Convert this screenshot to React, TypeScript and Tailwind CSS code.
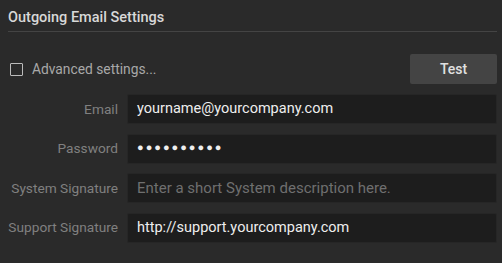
const fields = [
  { label: 'Email', value: 'yourname@yourcompany.com' },
  { label: 'Password', value: '●●●●●●●●●●', password: true },
  { label: 'System Signature', placeholder: 'Enter a short System description here.' },
  { label: 'Support Signature', value: 'http://support.yourcompany.com' },
]

export default function App() {
  return (
    <div
      className="w-[502px] h-[263px] bg-[#2a2a2a] pl-2 pr-[5px] pt-[9px]"
      style={{ fontFamily: 'Roboto, "Liberation Sans", sans-serif' }}
    >
      <div className="border-b border-[#444] pb-[4px]">
        <h1 className="text-[14.5px] leading-[18px] font-medium text-[#d8d8d8]">Outgoing Email Settings</h1>
      </div>

      <div className="flex items-center justify-between mt-[22px]">
        <label className="flex items-center gap-[9px] pl-[2px]">
          <span className="w-[13px] h-[13px] border border-[#bbb] rounded-[1px]" />
          <span className="text-[13.8px] text-[#a8a8a8]">Advanced settings...</span>
        </label>
        <button className="w-[87px] h-[30px] bg-[#444] rounded-[2px] text-[14px] font-medium text-[#e0e0e0]">
          Test
        </button>
      </div>

      <div className="flex flex-col gap-[9.5px] mt-[10px]">
        {fields.map((f) => (
          <div key={f.label} className="flex items-center gap-[9px]">
            <span className="w-[110px] text-right text-[13.7px] text-[#808080] whitespace-nowrap">{f.label}</span>
            <div className="flex-1 h-[30px] bg-[#1d1d1d] border border-[#262626] rounded-[2px] flex items-center px-[9px]">
              {f.value ? (
                <span
                  className={
                    f.password
                      ? 'text-[11px] tracking-[2px] text-[#eee]'
                      : 'text-[14.5px] text-[#eee]'
                  }
                >
                  {f.value}
                </span>
              ) : (
                <span className="text-[15px] text-[#6f6f6f]">{f.placeholder}</span>
              )}
            </div>
          </div>
        ))}
      </div>
    </div>
  )
}
